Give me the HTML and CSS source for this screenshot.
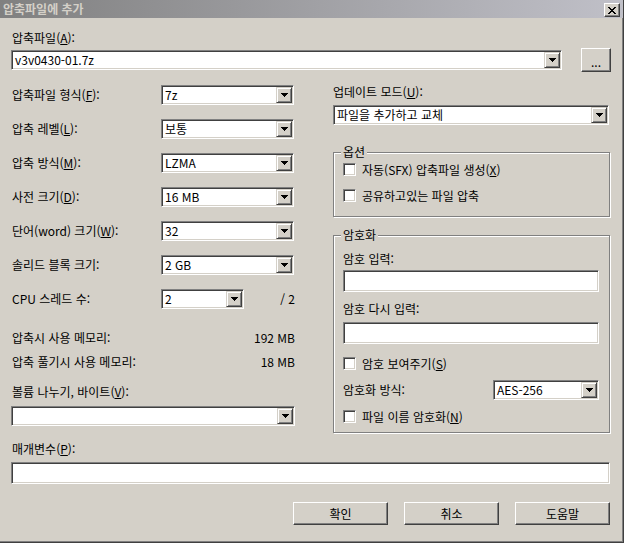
FILE: index.html
```html
<!DOCTYPE html>
<html lang="ko">
<head>
<meta charset="utf-8">
<title>압축파일에 추가</title>
<link rel="stylesheet" href="styles.css">
</head>
<body>
<div class="window">
  <div class="titlebar">
    <span class="title">압축파일에 추가</span>
    <span class="close"><svg width="8" height="7" viewBox="0 0 8 7"><path d="M0 0h2v1H0zM6 0h2v1H6zM1 1h2v1H1zM5 1h2v1H5zM2 2h4v1H2zM3 3h2v1H3zM2 4h4v1H2zM1 5h2v1H1zM5 5h2v1H5zM0 6h2v1H0zM6 6h2v1H6z"/></svg></span>
  </div>
  <div class="client">
    <div class="lbl top-lbl">압축파일(<u>A</u>):</div>
    <div class="archive-row">
      <div class="combo archive-combo"><span class="val">v3v0430-01.7z</span><span class="drop"><svg width="7" height="4" viewBox="0 0 7 4"><path d="M0 0h7v1H0zM1 1h5v1H1zM2 2h3v1H2zM3 3h1v1H3z"/></svg></span></div>
      <div class="btn browse">...</div>
    </div>

    <div class="main">
      <div class="left">
        <div class="frow"><span class="flabel">압축파일 형식(<u>F</u>):</span><div class="combo w133"><span class="val">7z</span><span class="drop"><svg width="7" height="4" viewBox="0 0 7 4"><path d="M0 0h7v1H0zM1 1h5v1H1zM2 2h3v1H2zM3 3h1v1H3z"/></svg></span></div></div>
        <div class="frow"><span class="flabel">압축 레벨(<u>L</u>):</span><div class="combo w133"><span class="val">보통</span><span class="drop"><svg width="7" height="4" viewBox="0 0 7 4"><path d="M0 0h7v1H0zM1 1h5v1H1zM2 2h3v1H2zM3 3h1v1H3z"/></svg></span></div></div>
        <div class="frow"><span class="flabel">압축 방식(<u>M</u>):</span><div class="combo w133"><span class="val">LZMA</span><span class="drop"><svg width="7" height="4" viewBox="0 0 7 4"><path d="M0 0h7v1H0zM1 1h5v1H1zM2 2h3v1H2zM3 3h1v1H3z"/></svg></span></div></div>
        <div class="frow"><span class="flabel">사전 크기(<u>D</u>):</span><div class="combo w133"><span class="val">16 MB</span><span class="drop"><svg width="7" height="4" viewBox="0 0 7 4"><path d="M0 0h7v1H0zM1 1h5v1H1zM2 2h3v1H2zM3 3h1v1H3z"/></svg></span></div></div>
        <div class="frow"><span class="flabel">단어(word) 크기(<u>W</u>):</span><div class="combo w133"><span class="val">32</span><span class="drop"><svg width="7" height="4" viewBox="0 0 7 4"><path d="M0 0h7v1H0zM1 1h5v1H1zM2 2h3v1H2zM3 3h1v1H3z"/></svg></span></div></div>
        <div class="frow"><span class="flabel">솔리드 블록 크기:</span><div class="combo w133"><span class="val">2 GB</span><span class="drop"><svg width="7" height="4" viewBox="0 0 7 4"><path d="M0 0h7v1H0zM1 1h5v1H1zM2 2h3v1H2zM3 3h1v1H3z"/></svg></span></div></div>
        <div class="frow"><span class="flabel">CPU 스레드 수:</span><div class="combo w83"><span class="val">2</span><span class="drop"><svg width="7" height="4" viewBox="0 0 7 4"><path d="M0 0h7v1H0zM1 1h5v1H1zM2 2h3v1H2zM3 3h1v1H3z"/></svg></span></div><span class="cpu-total">/ 2</span></div>
        <div class="mem mem1"><span>압축시 사용 메모리:</span><span>192 MB</span></div>
        <div class="mem mem2"><span>압축 풀기시 사용 메모리:</span><span>18 MB</span></div>
        <div class="lbl vol-lbl">볼륨 나누기, 바이트(<u>V</u>):</div>
        <div class="combo vol"><span class="val"></span><span class="drop"><svg width="7" height="4" viewBox="0 0 7 4"><path d="M0 0h7v1H0zM1 1h5v1H1zM2 2h3v1H2zM3 3h1v1H3z"/></svg></span></div>
      </div>

      <div class="right">
        <div class="lbl">업데이트 모드(<u>U</u>):</div>
        <div class="combo upd"><span class="val">파일을 추가하고 교체</span><span class="drop"><svg width="7" height="4" viewBox="0 0 7 4"><path d="M0 0h7v1H0zM1 1h5v1H1zM2 2h3v1H2zM3 3h1v1H3z"/></svg></span></div>

        <div class="group opts">
          <div class="group-title">옵션</div>
          <div class="check check1"><span class="box"></span><span>자동(SFX) 압축파일 생성(<u>X</u>)</span></div>
          <div class="check check2"><span class="box"></span><span>공유하고있는 파일 압축</span></div>
        </div>

        <div class="group enc">
          <div class="group-title">암호화</div>
          <div class="lbl pw-lbl">암호 입력:</div>
          <div class="edit pw"></div>
          <div class="lbl pw-lbl2">암호 다시 입력:</div>
          <div class="edit pw pw2"></div>
          <div class="check show-pw"><span class="box"></span><span>암호 보여주기(<u>S</u>)</span></div>
          <div class="method-row"><span>암호화 방식:</span><div class="combo w106"><span class="val">AES-256</span><span class="drop"><svg width="7" height="4" viewBox="0 0 7 4"><path d="M0 0h7v1H0zM1 1h5v1H1zM2 2h3v1H2zM3 3h1v1H3z"/></svg></span></div></div>
          <div class="check enc-names"><span class="box"></span><span>파일 이름 암호화(<u>N</u>)</span></div>
        </div>
      </div>
    </div>

    <div class="lbl param-lbl">매개변수(<u>P</u>):</div>
    <div class="edit param"></div>

    <div class="buttons">
      <div class="btn action">확인</div>
      <div class="btn action">취소</div>
      <div class="btn action">도움말</div>
    </div>
  </div>
</div>
</body>
</html>
```

FILE: styles.css
```css
* { box-sizing: border-box; }

body {
  margin: 0;
  background: #ffffff;
  font-family: "Noto Sans CJK KR", "Liberation Sans", sans-serif;
  font-size: 12px;
  line-height: 14px;
  color: #000;
}

u { text-decoration: underline; text-underline-offset: 1px; }

.window {
  width: 624px;
  height: 543px;
  background: #d4d0c8;
  border-right: 1px solid #404040;
  border-bottom: 1px solid #404040;
  box-shadow: inset -1px -1px 0 #808080;
}

.titlebar {
  height: 18px;
  display: flex;
  align-items: flex-start;
  background: linear-gradient(90deg, #808080, #c0c0c8);
}

.title {
  padding-left: 3px;
  line-height: 18px;
  font-weight: bold;
  color: #d4d0c8;
}

.close {
  margin-left: auto;
  margin-right: 3px;
  margin-top: 3px;
  width: 16px;
  height: 14px;
  display: flex;
  align-items: center;
  justify-content: center;
  background: #d4d0c8;
  border: 1px solid;
  border-color: #ffffff #404040 #404040 #ffffff;
  box-shadow: inset -1px -1px 0 #808080;
}

.client {
  padding: 0 12px 0 11px;
}

.lbl { white-space: nowrap; }

.top-lbl { margin-top: 13px; padding-left: 1px; }

.archive-row {
  margin-top: 3px;
  height: 24px;
  display: flex;
  align-items: center;
  gap: 19px;
}

.archive-combo { flex: 1; }

/* sunken combo box */
.combo {
  display: flex;
  align-items: center;
  height: 20px;
  padding: 1px;
  background: #fff;
  border: 1px solid;
  border-color: #808080 #ffffff #ffffff #808080;
  box-shadow: inset 1px 1px 0 #404040, inset -1px -1px 0 #d4d0c8;
  white-space: nowrap;
}

.val {
  flex: 1;
  padding-left: 2px;
}

.drop {
  width: 16px;
  height: 16px;
  flex: none;
  display: flex;
  align-items: center;
  justify-content: center;
  background: #d4d0c8;
  border: 1px solid;
  border-color: #d4d0c8 #404040 #404040 #d4d0c8;
  box-shadow: inset 1px 1px 0 #ffffff, inset -1px -1px 0 #808080;
}

.drop svg { display: block; }

.edit {
  height: 22px;
  background: #fff;
  border: 1px solid;
  border-color: #808080 #ffffff #ffffff #808080;
  box-shadow: inset 1px 1px 0 #404040, inset -1px -1px 0 #d4d0c8;
}

/* raised button */
.btn {
  display: flex;
  align-items: center;
  justify-content: center;
  background: #d4d0c8;
  border: 1px solid;
  border-color: #ffffff #404040 #404040 #ffffff;
  box-shadow: inset -1px -1px 0 #808080, inset 1px 1px 0 #d4d0c8;
}

.browse {
  width: 30px;
  height: 24px;
  flex: none;
  padding-top: 4px;
}

.main {
  margin-top: 13px;
  display: grid;
  grid-template-columns: 284px 277px;
  column-gap: 38px;
  align-items: start;
}

.frow {
  display: flex;
  align-items: center;
  height: 20px;
  margin-bottom: 14px;
}

.flabel {
  width: 150px;
  padding-left: 1px;
  white-space: nowrap;
}

.w133 { width: 133px; }
.w83 { width: 83px; }
.w106 { width: 106px; }

.cpu-total {
  margin-left: auto;
}

.mem {
  display: flex;
  justify-content: space-between;
  padding-left: 1px;
  white-space: nowrap;
}

.mem1 { margin-top: 22px; }
.mem2 { margin-top: 10px; }

.vol-lbl { margin-top: 16px; padding-left: 1px; }
.vol { margin-top: 7px; width: 284px; }

.upd { margin-top: 6px; width: 276px; }

.group {
  border: 1px solid #808080;
  box-shadow: 1px 1px 0 #ffffff, inset 1px 1px 0 #ffffff;
  padding: 0 0 0 9px;
}

.group-title {
  width: fit-content;
  margin: -8px 0 0 -2px;
  padding: 0 2px;
  background: #d4d0c8;
  line-height: 14px;
}

.opts { margin-top: 27px; padding-bottom: 13px; }
.enc { margin-top: 18px; padding-bottom: 8px; }

.check {
  display: flex;
  align-items: center;
  gap: 6px;
  height: 15px;
  white-space: nowrap;
}

.check1 { margin-top: 3px; }
.check2 { margin-top: 11px; }

.box {
  width: 13px;
  height: 13px;
  flex: none;
  background: #fff;
  border: 1px solid;
  border-color: #808080 #ffffff #ffffff #808080;
  box-shadow: inset 1px 1px 0 #404040, inset -1px -1px 0 #d4d0c8;
}

.pw-lbl { margin-top: 10px; }
.pw { margin-top: 4px; width: 256px; }
.pw-lbl2 { margin-top: 10px; }
.pw2 { margin-top: 6px; }

.show-pw { margin-top: 12px; }

.method-row {
  margin-top: 9px;
  height: 20px;
  display: flex;
  align-items: center;
  justify-content: space-between;
  padding-right: 10px;
}

.enc-names { margin-top: 9px; }

.param-lbl { margin-top: 9px; padding-left: 1px; }
.param { margin-top: 6px; width: 599px; }

.buttons {
  margin-top: 18px;
  display: flex;
  justify-content: flex-end;
  gap: 16px;
  padding-right: 1px;
}

.action {
  width: 95px;
  height: 23px;
}
```
